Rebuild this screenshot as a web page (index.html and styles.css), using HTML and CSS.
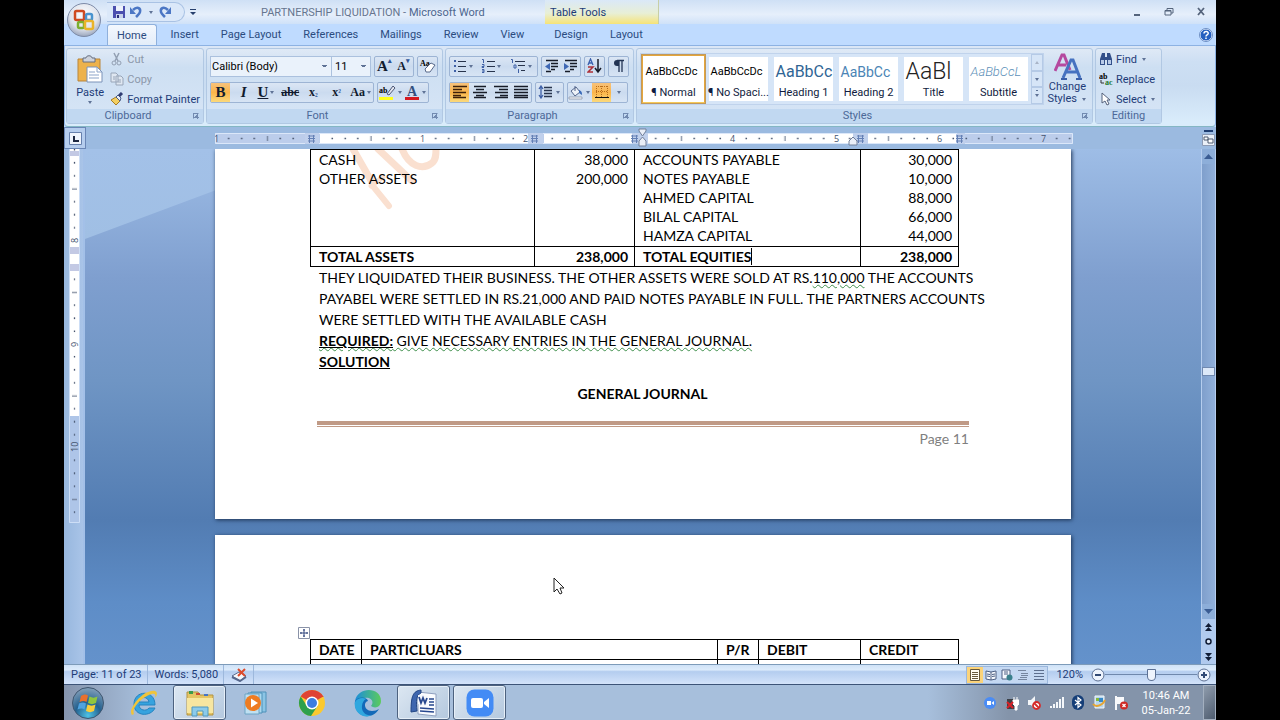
FILE: index.html
```html
<!DOCTYPE html>
<html lang="en">

<head>
	<meta charset="UTF-8" />
	<meta name="viewport" content="width=device-width, initial-scale=1.0" />
	<title>PARTNERSHIP LIQUIDATION - Microsoft Word</title>
	<link rel="stylesheet" href="styles.css">
</head>

<body>
	<div class="desktop">
		<button class="office" aria-label="Office Button">
			<svg width="36" height="36" viewBox="0 0 36 36">
				<defs>
					<radialGradient id="orb" cx="50%" cy="35%" r="65%">
						<stop offset="0" stop-color="#fff" />
						<stop offset=".65" stop-color="#dfe3ec" />
						<stop offset="1" stop-color="#9aa6bd" />
					</radialGradient>
				</defs>
				<circle cx="18" cy="18" r="16.5" fill="url(#orb)" stroke="#7d8ba8" />
				<g fill="none" stroke-width="2.500">
					<rect x="9" y="9" width="9" height="9" rx="1.500" stroke="#cf4a20" />
					<rect x="20" y="12" width="6" height="6" rx="1.500" stroke="#4a94cf" />
					<rect x="12" y="20" width="6" height="6" rx="1.500" stroke="#7cae2f" />
					<rect x="19" y="19" width="8" height="8" rx="1.500" stroke="#e9b42a" />
				</g>
			</svg>
		</button>

		<div class="titlebar">
			<div class="quick">
				<button aria-label="Save"><svg width="14" height="14" viewBox="0 0 14 14"><path d="M1 1h12v12H1z" fill="#4b4fae" /><path d="M4 1h7v5H4z" fill="#eef2fb" /><path d="M4 9h7v4H4z" fill="#c9d3ea" /><path d="M5 10h2v3H5z" fill="#2c2f78" /></svg></button>
				<button aria-label="Undo"><svg width="14" height="14" viewBox="0 0 14 14"><path d="M4 5c4-4 8-2 7 2-.4 2-2 3-4 5" fill="none" stroke="#4b76c4" stroke-width="2.500" /><path d="M1 2v7h6z" fill="#4b76c4" /></svg></button>
				<i class="arrow"></i>
				<button aria-label="Redo"><svg width="14" height="14" viewBox="0 0 14 14"><path d="M10 5c-4-4-8-2-7 2 .4 2 2 3 4 5" fill="none" stroke="#4b76c4" stroke-width="2.500" /><path d="M13 2v7H7z" fill="#4b76c4" /></svg></button>
			</div>
			<button class="custom" aria-label="Customize"><svg width="6" height="7"><path d="M0 0h6v1H0zM0 3h6L3 6z" fill="#27406e" /></svg></button>
			<div class="title">PARTNERSHIP LIQUIDATION - <span>Microsoft Word</span></div>
			<div class="context">Table Tools</div>
			<div class="winbtns">
				<button aria-label="Minimize"><svg width="10" height="10"><path d="M2 7h6v2H2z" fill="#55647c" /></svg></button>
				<button aria-label="Restore"><svg width="10" height="10"><path d="M3 3V1.500h6V6H7M1 3.500h6V8H1zM1 4h6" fill="none" stroke="#55647c" /></svg></button>
				<button aria-label="Close"><svg width="10" height="10"><path d="M2 1l6 7M8 1L2 8" stroke="#55647c" stroke-width="1.800" /></svg></button>
			</div>
		</div>

		<div class="tabs">
			<button class="active">Home</button>
			<button>Insert</button>
			<button>Page Layout</button>
			<button>References</button>
			<button>Mailings</button>
			<button>Review</button>
			<button>View</button>
			<div class="context-tabs">
				<button>Design</button>
				<button>Layout</button>
			</div>
			<button class="help" aria-label="Help"><svg width="14" height="14" viewBox="0 0 14 14"><circle cx="7" cy="7" r="6" fill="#2560c0" stroke="#e6f0ff" /><circle cx="7" cy="7" r="6.500" fill="none" stroke="#6d8fc4" /><path d="M5 5.500c0-3 4.500-2.600 4.200 0C9 7 7 6.800 7 8.500M7 9.500v1.500" fill="none" stroke="#fff" stroke-width="1.500" /></svg></button>
		</div>

		<div class="ribbon">
			<div class="group clipboard">
				<div class="body">
					<button class="paste">
						<svg width="26" height="28" viewBox="0 0 26 28"><path d="M1 4h22v22H1z" fill="#edb24c" stroke="#b9853a" /><path d="M6 3h3c0-3 6-3 6 0h3v4H6z" fill="#cdd2dc" stroke="#676f80" /><path d="M10 12h10l5 5v10H10z" fill="#fff" stroke="#7b92b8" /><path d="M20 12v5h5M12 17h6M12 20h10M12 23h10" fill="none" stroke="#8ba3c8" /></svg>
						<span>Paste</span>
						<i class="arrow"></i>
					</button>
					<div class="list">
						<button class="off"><svg width="14" height="14"><path d="M4 1l4 8M9 1L5 9" stroke="#929fb2" stroke-width="1.500" /><circle cx="4" cy="11" r="2" fill="none" stroke="#929fb2" /><circle cx="9" cy="11" r="2" fill="none" stroke="#929fb2" /></svg>Cut</button>
						<button class="off"><svg width="14" height="14"><path d="M1 1h5l2 2v7H1zM6 4h5l2 2v7H6z" fill="#dfe7f1" stroke="#98a5b8" /><path d="M8 8h3M8 10h3M3 5h2M3 7h2" stroke="#98a5b8" /></svg>Copy</button>
						<button><svg width="14" height="14"><path d="M1 8l5-3 4 4-4 4z" fill="#f3cf63" stroke="#a77d25" /><path d="M6 5l2-2 3 3-1 3z" fill="#e9edf5" stroke="#4a5e88" /><path d="M9 4l3-3" stroke="#303c72" stroke-width="3" /></svg>Format Painter</button>
					</div>
				</div>
				<div class="label">Clipboard<i class="launch"></i></div>
			</div>

			<div class="group font">
				<div class="body rows">
					<div class="row">
						<div class="combo">
							<select class="family" aria-label="Font"><option>Calibri (Body)</option><option>Cambria</option></select>
							<select class="size" aria-label="Font size"><option>11</option><option>12</option></select>
						</div>
						<div class="set">
							<button class="serif grow">A<sup>▴</sup></button>
							<button class="serif shrink">A<sup>▾</sup></button>
						</div>
						<div class="set"><button aria-label="Clear formatting"><svg width="18" height="16"><text x="1" y="8" class="tiny">Aa</text><path d="M6 11l6-6 4 2-5 7H7z" fill="#fff" stroke="#596a8b" /></svg></button></div>
					</div>
					<div class="row">
						<div class="set wide">
							<button class="serif on"><b>B</b></button>
							<button class="serif"><em>I</em></button>
							<button class="serif"><u>U</u><i class="arrow"></i></button>
							<button class="abc"><s>abc</s></button>
							<button class="abc">x<sub>₂</sub></button>
							<button class="abc">x<sub>²</sub></button>
							<button class="abc">Aa<i class="arrow"></i></button>
						</div>
						<div class="set">
							<button aria-label="Highlight"><svg width="18" height="17"><text x="1" y="9" class="tiny">ab</text><path d="M9 10l6-8 2 2-6 7z" fill="#e5e8f0" stroke="#4c5674" /><path d="M1 13h14v3H1z" fill="#ffff1c" /></svg><i class="arrow"></i></button>
							<button class="serif" aria-label="Font color"><svg width="16" height="17"><text x="3" y="12" class="big">A</text><path d="M1 13h14v3H1z" fill="#d51920" /></svg><i class="arrow"></i></button>
						</div>
					</div>
				</div>
				<div class="label">Font<i class="launch"></i></div>
			</div>

			<div class="group paragraph">
				<div class="body rows">
					<div class="row">
						<div class="set fill89">
							<button aria-label="Bullets"><svg width="14" height="14"><path d="M5 2.500h8M5 7.500h8M5 12.500h8" stroke="#28344c" /><path d="M1 1h2v2H1zM1 6h2v2H1zM1 11h2v2H1z" fill="#3f60a6" /></svg><i class="arrow"></i></button>
							<button aria-label="Numbering"><svg width="14" height="14"><path d="M6 2.500h8M6 7.500h8M6 12.500h8" stroke="#28344c" /><path d="M1 .500h1.500V4M1 5.500h2v2H1v1h2M1 10.500h2v3H1M1 12h2" fill="none" stroke="#3f60a6" /></svg><i class="arrow"></i></button>
							<button aria-label="Multilevel list"><svg width="16" height="14"><path d="M5 2.500h10M8 6.500h7M11 11.500h4" stroke="#28344c" /><path d="M1 .500h1.500V4M4 6h2v3H4zM8.500 10v4" fill="none" stroke="#3f60a6" /></svg><i class="arrow"></i></button>
						</div>
						<div class="set">
							<button aria-label="Decrease indent"><svg width="14" height="14"><path d="M1 1.500h12M6 4.500h7M6 7.500h7M6 10.500h4M1 12.500h5" stroke="#171c28" stroke-width="1.500" /><path d="M5 4v7L0 7.500z" fill="#3f68b5" /></svg></button>
							<button aria-label="Increase indent"><svg width="14" height="14"><path d="M1 1.500h12M6 4.500h7M6 7.500h7M6 10.500h4M1 12.500h5" stroke="#171c28" stroke-width="1.500" /><path d="M0 4v7l5-3.500z" fill="#3f68b5" /></svg></button>
						</div>
						<div class="set"><button aria-label="Sort"><svg width="15" height="16"><path d="M1 7l2.500-6L6 7M2 5h3" fill="none" stroke="#3b61ae" stroke-width="1.300" /><path d="M1 9h5l-5 5h5" fill="none" stroke="#ad3038" stroke-width="1.500" /><path d="M11 1v12M8 10l3 4 3-4" fill="none" stroke="#171c28" stroke-width="1.500" /></svg></button></div>
						<div class="set"><button aria-label="Show marks"><svg width="12" height="14"><path d="M6 1H4a3 3 0 000 6h2z" fill="#223454" /><path d="M4 1.500h7M6 1v12M9 1v12" stroke="#223454" stroke-width="1.300" /></svg></button></div>
					</div>
					<div class="row">
						<div class="set fill83">
							<button class="on" aria-label="Align left"><svg width="14" height="14"><path d="M0 1.500h14M0 4.500h9M0 7.500h13M0 10.500h8M0 12.500h13" stroke="#3d210b" stroke-width="1.500" /></svg></button>
							<button aria-label="Center"><svg width="14" height="14"><path d="M1 1.500h12M3 4.500h8M0 7.500h14M3 10.500h8M1 12.500h12" stroke="#171c28" stroke-width="1.500" /></svg></button>
							<button aria-label="Align right"><svg width="14" height="14"><path d="M0 1.500h14M5 4.500h9M1 7.500h13M6 10.500h8M1 12.500h13" stroke="#171c28" stroke-width="1.500" /></svg></button>
							<button aria-label="Justify"><svg width="14" height="14"><path d="M0 1.500h14M0 4.500h14M0 7.500h14M0 10.500h14M0 12.500h14" stroke="#171c28" stroke-width="1.500" /></svg></button>
						</div>
						<div class="set"><button class="spacing" aria-label="Line spacing"><svg width="16" height="14"><path d="M6 2.500h8M6 5.500h8M6 8.500h8M6 11.500h8" stroke="#28344c" stroke-width="1.300" /><path d="M3 2v10M1 4l2-3 2 3M1 10l2 3 2-3" fill="none" stroke="#3f60a6" stroke-width="1.300" /></svg><i class="arrow"></i></button></div>
						<div class="set">
							<button aria-label="Shading"><svg width="16" height="15"><path d="M3 6l5-4 4 5-5 4z" fill="#eef2f8" stroke="#53658a" /><path d="M11 5c3 1 3 3 3 5l-3-2z" fill="#3a6ab8" /><path d="M7 1v5" stroke="#53658a" /><path d="M1 12h13v2H1z" fill="#fff" stroke="#9aa4b6" /></svg><i class="arrow"></i></button>
							<button class="on" aria-label="Borders"><svg width="14" height="14"><path d="M1.500 1v11M6.500 1v11M12.500 1v11M1 1.500h12M1 6.500h12" stroke="#b86d1b" stroke-dasharray="1 1" /><path d="M0 12h14v1H0z" fill="#111" /></svg></button>
							<button class="thin" aria-label="Border options"><i class="arrow"></i></button>
						</div>
					</div>
				</div>
				<div class="label">Paragraph<i class="launch"></i></div>
			</div>

			<div class="group styles">
				<div class="body">
					<div class="gallery">
						<button class="chosen"><span class="sample">AaBbCcDc</span><span>¶ Normal</span></button>
						<button><span class="sample">AaBbCcDc</span><span>¶ No Spaci...</span></button>
						<button><span class="sample h1">AaBbCc</span><span>Heading 1</span></button>
						<button><span class="sample h2">AaBbCc</span><span>Heading 2</span></button>
						<button><span class="sample ttl">AaBl</span><span>Title</span></button>
						<button><span class="sample sub">AaBbCcL</span><span>Subtitle</span></button>
						<div class="pager">
							<button aria-label="Up"><i class="arrow up"></i></button>
							<button aria-label="Down"><i class="arrow"></i></button>
							<button aria-label="More"><i class="arrow more"></i></button>
						</div>
					</div>
					<button class="change">
						<svg width="28" height="28"><path d="M1 18L8 2h2l6 15M4 12h8" fill="none" stroke="#b5499f" stroke-width="3" /><path d="M9 25l8-18h2l7 18M12 19h11" fill="none" stroke="#4672c0" stroke-width="3" /><path d="M7 26h6M22 26h6" stroke="#3a5fa8" stroke-width="2" /></svg>
						<span>Change</span>
						<span>Styles <i class="arrow"></i></span>
					</button>
				</div>
				<div class="label">Styles<i class="launch"></i></div>
			</div>

			<div class="group editing">
				<div class="body">
					<div class="list">
						<button><svg width="14" height="14"><path d="M3 1h3v4h2V1h3l2 6v6H8V8H6v5H1V7z" fill="#33508a" /><path d="M2 8h3v4H2zM9 8h3v4H9z" fill="#b9cbe9" /></svg>Find <i class="arrow"></i></button>
						<button><svg width="14" height="14"><text x="0" y="7" class="tiny">ab</text><path d="M2 8v3h3" fill="none" stroke="#333" /><text x="6" y="13" class="tiny green">ac</text></svg>Replace</button>
						<button><svg width="14" height="14"><path d="M3 1v10l3-2 2 4 2-1-2-4h3z" fill="#fff" stroke="#55627c" /></svg>Select <i class="arrow"></i></button>
					</div>
				</div>
				<div class="label">Editing</div>
			</div>
		</div>

		<div class="rulerbar">
			<button class="tabstop" aria-label="Left tab"><svg width="13" height="13"><path d="M.500.500h12v12H.500z" fill="#eef4fd" stroke="#6680ad" /><path d="M5 4v5h5" fill="none" stroke="#1c2742" stroke-width="2" /></svg></button>
			<svg class="hruler" width="858" height="21" viewBox="0 0 858 21">
				<defs>
					<pattern id="ticks" x="104" y="0" width="103.500" height="12" patternUnits="userSpaceOnUse">
						<path d="M12.500 5.500h1.500M25.500 5.500h1.500M38 5.500h1.500M64 5.500h1.500M77 5.500h1.500M90 5.500h1.500" stroke="#3f4d66" stroke-width="1.300" />
						<path d="M52 3v5" stroke="#5a6880" />
					</pattern>
				</defs>
				<path d="M0 5h858v11H0z" fill="#bccdeb" />
				<path d="M105 5h211v11H105zM329 5h88v11H329zM433 5h205v11H433zM653 5h88v11H653z" fill="#fff" />
				<g transform="translate(0 5)"><path d="M4 0h854v12H4z" fill="url(#ticks)" /></g>
				<path d="M.500 5.500h857v10H.500z" fill="none" stroke="#dbe7f9" />
				<g fill="#c0d0ec"><path d="M313 5h15v11h-15zM417 5h16v11h-16zM638 5h15v11h-15zM90 5h14v11H90zM742 5h8v11h-8z" /></g>
				<g stroke="#6480b5">
					<path d="M93 8h7M93 10.500h7M93 13h7M94.500 7v8M98.500 7v8M316 8h7M316 10.500h7M316 13h7M317.500 7v8M321.500 7v8M416 8h7M416 10.500h7M416 13h7M417.500 7v8M421.500 7v8M642 8h7M642 10.500h7M642 13h7M643.500 7v8M647.500 7v8M741 8h7M741 10.500h7M741 13h7M742.500 7v8M746.500 7v8" />
				</g>
				<path d="M424 1h7v2l-3.500 5L424 3zM424 18v-5l3.500-4 3.500 4v5zM634 17v-4l4-4 4 4v4z" fill="#e9eef7" stroke="#72809b" />
				<g class="nums"><text x="-1" y="14">1</text><text x="205" y="14">1</text><text x="308" y="14">2</text><text x="515" y="14">4</text><text x="619" y="14">5</text><text x="722" y="14">6</text><text x="826" y="14">7</text></g>
			</svg>
			<button class="viewruler" aria-label="View ruler"><svg width="13" height="17"><path d="M2 0h9v2H2z" fill="#1d3c70" /><path d="M.500 4.500h12v11H.500z" fill="#eaf0f8" stroke="#8c9bb5" /><path d="M2 7h4v3H2zM6 9h5v4H6z" fill="#fff" stroke="#4d5a70" /></svg></button>
		</div>

		<div class="workspace">
			<div class="vruler">
				<svg width="11" height="374" viewBox="0 0 11 374">
					<defs>
						<pattern id="vticks" x="0" y="-12" width="11" height="103.500" patternUnits="userSpaceOnUse">
							<path d="M5.500 12v1.500M5.500 25v1.500M5.500 38v1.500M5.500 64v1.500M5.500 77v1.500M5.500 90v1.500" stroke="#3f4d66" stroke-width="1.300" />
							<path d="M3 52h5" stroke="#5a6880" />
						</pattern>
					</defs>
					<path d="M0 0h11v267H0z" fill="#fff" />
					<path d="M0 267h11v107H0z" fill="#aec5e8" />
					<path d="M0 2h11v5H0z" fill="#c3c9e4" />
					<path d="M0 0h11v374H0z" fill="url(#vticks)" />
					<path d="M0 86h11v34H0z" fill="#fff" />
					<path d="M0 98h11v7H0zM0 115h11v7H0z" fill="#c3c9e4" />
					<path d="M.500 0v373.500h10V0" fill="none" stroke="#cddef6" />
					<g class="nums"><text transform="translate(9 94) rotate(-90)">8</text><text transform="translate(9 198) rotate(-90)">9</text><text transform="translate(9 303) rotate(-90)">10</text></g>
				</svg>
			</div>

			<div class="canvas">
				<div class="page first">
					<svg class="watermark" width="110" height="70" viewBox="0 0 110 70"><g fill="none" stroke="#fae0d0" stroke-width="7" stroke-linecap="round"><path d="M13 0l20 35M38 0l34 32" /><path d="M32 36l17 21" stroke-width="6" /><path d="M31 37l12-9" stroke-width="5" /><path d="M62 0c7 17 20 22 30 14 4-3 4-8 4-14" /></g></svg>
					<table class="sheet balance">
						<tr class="lines">
							<td>CASH<br>OTHER ASSETS</td>
							<td class="num">38,000<br>200,000</td>
							<td>ACCOUNTS PAYABLE<br>NOTES PAYABLE<br>AHMED CAPITAL<br>BILAL CAPITAL<br>HAMZA CAPITAL</td>
							<td class="num">30,000<br>10,000<br>88,000<br>66,000<br>44,000</td>
						</tr>
						<tr class="total">
							<td>TOTAL ASSETS</td>
							<td class="num">238,000</td>
							<td><span class="caret">TOTAL EQUITIES</span></td>
							<td class="num">238,000</td>
						</tr>
					</table>
					<div class="text">
						<p>THEY LIQUIDATED THEIR BUSINESS. THE OTHER ASSETS WERE SOLD AT RS.<span class="wavy">110,000</span> THE ACCOUNTS<br>PAYABEL WERE SETTLED IN RS.21,000 AND PAID NOTES PAYABLE IN FULL. THE PARTNERS ACCOUNTS<br>WERE SETTLED WITH THE AVAILABLE CASH</p>
						<p class="wavy"><b><u>REQUIRED:</u></b> GIVE NECESSARY ENTRIES IN THE GENERAL JOURNAL.</p>
						<p><b><u>SOLUTION</u></b></p>
						<h1>GENERAL JOURNAL</h1>
					</div>
					<div class="footer">Page 11</div>
				</div>
				<div class="page second">
					<svg class="handle" width="12" height="12"><path d="M.500.500h11v11H.500z" fill="#fff" stroke="#8a93a8" /><path d="M6 2v8M2 6h8M5 3h2M5 9h2M3 5v2M9 5v2" stroke="#34487e" /></svg>
					<table class="sheet journal">
						<tr>
							<th>DATE</th>
							<th>PARTICLUARS</th>
							<th>P/R</th>
							<th>DEBIT</th>
							<th>CREDIT</th>
						</tr>
						<tr>
							<td></td>
							<td></td>
							<td></td>
							<td></td>
							<td></td>
						</tr>
					</table>
				</div>
				<svg class="cursor" width="12" height="18"><path d="M1 1v14l3-3 3 5 2-1-2-5h4z" fill="#fff" stroke="#222" /></svg>
			</div>

			<div class="scroll">
				<button aria-label="Scroll up"><svg width="9" height="5"><path d="M0 5h9L4.500 0z" fill="#3a5c93" /></svg></button>
				<div class="track"><div class="thumb"></div></div>
				<button aria-label="Scroll down"><svg width="9" height="5"><path d="M0 0h9L4.500 5z" fill="#3a5c93" /></svg></button>
				<button class="nav" aria-label="Previous page"><svg width="7" height="8"><path d="M0 4h7L3.500 0zM0 8h7L3.500 4z" fill="#111d35" /></svg></button>
				<button class="nav" aria-label="Browse object"><svg width="7" height="7"><circle cx="3.500" cy="3.500" r="2.500" fill="#dde8f8" stroke="#111d35" stroke-width="1.500" /></svg></button>
				<button class="nav" aria-label="Next page"><svg width="7" height="8"><path d="M0 0h7L3.500 4zM0 4h7L3.500 8z" fill="#111d35" /></svg></button>
			</div>
		</div>

		<div class="status">
			<span>Page: 11 of 23</span>
			<span>Words: 5,080</span>
			<span><svg width="17" height="14"><path d="M1 8l7-4 7 4-6 5z" fill="#f4f7fb" stroke="#56688d" /><path d="M1 9l8 4 6-4" fill="none" stroke="#56688d" stroke-width="2" /><path d="M7 1l7 7M14 1L7 8" stroke="#dc4a2c" stroke-width="2" /></svg></span>
			<div class="views">
				<button class="on" aria-label="Print layout"><svg width="12" height="12"><path d="M1.500.500h9v11h-9z" fill="#fffdf2" stroke="#66593c" /><path d="M3 3.500h6M3 5.500h6M3 7.500h6M3 9.500h6" stroke="#66593c" /></svg></button>
				<button aria-label="Full screen reading"><svg width="12" height="12"><path d="M1 2l5 1 5-1v8l-5 1-5-1zM6 3v8M2 5l3 .500M2 7l3 .500M7 5.500L10 5M7 7.500L10 7" fill="#f6f9fe" stroke="#4c5f82" /></svg></button>
				<button aria-label="Web layout"><svg width="12" height="12"><path d="M1 1h8v9H1zM3 3h4M3 5h4" fill="#f6f9fe" stroke="#4c5f82" /><circle cx="8.500" cy="8.500" r="3" fill="#39808c" /></svg></button>
				<button aria-label="Outline"><svg width="12" height="12"><path d="M1 1.500h8M4 4.500h7M4 6.500h7M3 8.500h7M1 10.500h9" stroke="#75869f" /></svg></button>
				<button aria-label="Draft"><svg width="12" height="12"><path d="M1 1.500h10M1 4.500h10M1 7.500h10M1 10.500h10" stroke="#5d6f8d" /></svg></button>
			</div>
			<label for="zoomer">120%</label>
			<button class="round" aria-label="Zoom out"><svg width="14" height="14"><circle cx="7" cy="7" r="6" fill="#eef4fd" stroke="#5d7194" /><path d="M4 7h6" stroke="#324a75" stroke-width="2" /></svg></button>
			<input type="range" id="zoomer" min="0" max="100" value="50">
			<button class="round" aria-label="Zoom in"><svg width="14" height="14"><circle cx="7" cy="7" r="6" fill="#eef4fd" stroke="#5d7194" /><path d="M4 7h6M7 4v6" stroke="#324a75" stroke-width="2" /></svg></button>
		</div>

		<div class="taskbar">
			<button class="start" aria-label="Start">
				<svg width="34" height="34" viewBox="0 0 34 34">
					<defs>
						<radialGradient id="startorb" cx="50%" cy="90%" r="85%">
							<stop offset="0" stop-color="#4ec3e6" />
							<stop offset=".5" stop-color="#24618f" />
							<stop offset="1" stop-color="#7d9bb6" />
						</radialGradient>
					</defs>
					<circle cx="17" cy="17" r="15.500" fill="url(#startorb)" stroke="#40566f" />
					<path d="M10 10c3-2 5-2 7-.500L15.500 16c-2-1.500-4-1.500-7 0z" fill="#e9702d" />
					<path d="M18.500 10.500c3 1.500 5 1.500 8 0L25 17c-3 1.500-5 1.500-8 0z" fill="#91c63e" />
					<path d="M8 17.500c3-1.500 5-1.500 7 0L13.500 23.500c-2-1.500-4-1.500-7 0z" fill="#4fa3e0" />
					<path d="M16.500 18.500c3 1.500 5 1.500 8 0L23 25c-3 1.500-5 1.500-8 0z" fill="#f8cd3c" />
				</svg>
			</button>
			<button class="task" aria-label="Internet Explorer">
				<svg width="30" height="30"><path d="M10 17h16c0-16-21-15-21-1 0 13 17 13 21 4h-6c-3 4-10 2-10-3zm0-3c1-6 9-6 10 0z" fill="#36a3df" fill-rule="evenodd" stroke="#2583c0" /><path d="M3 27C-2 22 14 1 26 3c3 1 2 5 0 7 1-3 0-5-3-4C14 8 2 20 5 26z" fill="#f0c43a" /></svg>
			</button>
			<button class="task open" aria-label="Explorer">
				<svg width="32" height="30"><path d="M3 4h11l2 3h13v20H3z" fill="#e5c564" stroke="#b29343" /><path d="M5 3h4v3H5z" fill="#3b9a4c" /><path d="M12 5h4v2h-4z" fill="#d14b33" /><path d="M20 6h4v2h-4z" fill="#4574c4" /><path d="M3 10h26v15H3z" fill="#f7e6a0" /><path d="M8 28v-9h16v9h-5v-5h-6v5z" fill="#8ccbea" stroke="#4e98bf" /></svg>
			</button>
			<button class="task" aria-label="Media Player">
				<svg width="26" height="26"><path d="M8 2h15v20H8z" fill="#8cc5e5" stroke="#4e91b9" /><path d="M5 3h14v20H5z" fill="#acd9ef" stroke="#4e91b9" /><path d="M2 4h14v20H2z" fill="#bfe0f2" stroke="#6da4c4" /><circle cx="10" cy="13" r="8" fill="#ee7c22" /><path d="M8 8.500v9l7-4.500z" fill="#fff" /></svg>
			</button>
			<button class="task" aria-label="Chrome">
				<svg width="28" height="28" viewBox="0 0 28 28"><circle cx="14" cy="14" r="13" fill="#fbc92f" /><path d="M14 14L2.700 7.500A13 13 0 0125.300 7.500z" fill="#df4334" /><path d="M2.700 7.500A13 13 0 0013 27l6.500-10H9z" fill="#2da04c" /><path d="M14 7.500h11.300" stroke="#df4334" /><circle cx="14" cy="14" r="6.500" fill="#fff" /><circle cx="14" cy="14" r="5" fill="#3c7de0" /></svg>
			</button>
			<button class="task" aria-label="Edge">
				<svg width="28" height="28" viewBox="0 0 28 28"><defs><linearGradient id="edge" x1="0" x2="1"><stop offset="0" stop-color="#1c8edb" /><stop offset="1" stop-color="#5ccb5c" /></linearGradient></defs><path d="M1 12C4-3 27-2 27 12c0 6-6 8-10 5 4-5-1-9-6-8-5 0-9 3-10 3z" fill="url(#edge)" /><path d="M1 12c4-5 12-4 13 0-5 1-4 10 4 10 3 0 5-1 7-2-8 13-26 7-24-8z" fill="#1269b8" /><path d="M8 17c-1 7 6 11 11 9C8 31-1 22 1 13c2-4 8-5 11-3-2 1-4 4-4 7z" fill="#2fa7df" /></svg>
			</button>
			<button class="task open" aria-label="Word">
				<svg width="30" height="30"><path d="M9 4l18 2v22L9 26z" fill="#fafcff" stroke="#8fa0bf" /><path d="M20 11h5M20 14h5M20 17h5M11 20l14 1M11 23l14 1" stroke="#28488f" stroke-width="1.500" /><path d="M2 24C2 8 4 3 12 2v3c-5 2-5 8-4 18z" fill="#3e66ae" stroke="#234684" /><path d="M9 7l10 1v9L9 16z" fill="#f4f7fc" /><path d="M10 9l2 6 2-5 2 5 2-5" fill="none" stroke="#28488f" stroke-width="1.800" /></svg>
			</button>
			<button class="task open" aria-label="Zoom">
				<svg width="28" height="28"><rect x=".500" y=".500" width="27" height="27" rx="8" fill="#438bf5" /><rect x="5" y="9" width="12" height="10" rx="2" fill="#fff" /><path d="M18 13l5-4v10l-5-4z" fill="#fff" /></svg>
			</button>
			<div class="tray">
				<svg width="14" height="14"><circle cx="7" cy="7" r="6" fill="#4a8cf5" /><path d="M4 5h4v4H4zM8.500 7L11 5v4z" fill="#fff" /></svg>
				<svg width="14" height="16"><path d="M2 4h8v10H2z" fill="#3d4148" /><path d="M9 2v3M12 2v3M8 5h6v4l-2 2v4h-2v-4L8 9z" fill="#fff" stroke="#fff" /><path d="M2 7l6 6M8 7l-6 6" stroke="#d82027" stroke-width="2" /></svg>
				<svg width="14" height="14"><path d="M1 4h3l4-4v13L4 9H1z" fill="#f3f5f8" /><circle cx="9.500" cy="9.500" r="3.500" fill="#fff" stroke="#d52b2b" stroke-width="1.800" /><path d="M7 7l5 5" stroke="#d52b2b" stroke-width="1.800" /></svg>
				<svg width="15" height="13"><path d="M1 10h2v2H1zM4 8h2v4H4zM7 6h2v6H7zM10 3h2v9h-2zM13 1h2v11h-2z" fill="#f4f7fa" /></svg>
				<svg width="12" height="15"><rect width="12" height="15" rx="6" fill="#153e78" /><path d="M3 5l6 5-3 2.500v-10L9 5l-6 5" fill="none" stroke="#fff" stroke-width="1.200" /></svg>
				<svg width="14" height="15"><path d="M3 1h9v12H3z" fill="#b7d6ec" stroke="#f4f8fb" /><path d="M4 3h3v3H4z" fill="#87b839" /><path d="M7 3h4v4H7z" fill="#3689c9" /><path d="M1 9c3 4 10 1 12-4" fill="none" stroke="#e6a533" stroke-width="2" /></svg>
				<svg width="15" height="15"><path d="M1 1v14h2V9h7V2H3V1z" fill="#f8f9fb" /><circle cx="10" cy="10.500" r="4" fill="#cf2a25" /><path d="M8.500 9l3 3M11.500 9l-3 3" stroke="#fff" stroke-width="1.300" /></svg>
			</div>
			<div class="clock">10:46 AM<br>05-Jan-22</div>
			<button class="show" aria-label="Show desktop"></button>
		</div>
	</div>
</body>

</html>
```
FILE: styles.css
```css
*,
*::before {
	box-sizing: border-box;
}

html,
body {
	height: 100%;
	margin: 0;
}

body {
	background: #000;
	padding: 0 5%;
	overflow: hidden;
	font: 11px Roboto, "Open Sans", sans-serif;
	color: #1e3c78;
}

button {
	font: inherit;
	color: inherit;
	background: none;
	border: 0;
	padding: 0;
	margin: 0;
	display: flex;
	align-items: center;
	justify-content: center;
	white-space: nowrap;
}

svg {
	display: block;
	flex: none;
}

.desktop {
	position: relative;
	height: 100%;
	display: flex;
	flex-direction: column;
	background: #bfdbff;
}

.arrow {
	display: inline-block;
	flex: none;
	border: 2px solid transparent;
	border-top: 3px solid #5f7396;
	border-bottom: 0;
	margin: 0 2px;
	vertical-align: middle;
}

.arrow.up {
	border-top: 0;
	border-bottom: 3px solid #a9b4c6;
}

.arrow.more {
	box-shadow: 0 -5px 0 -1px #5f7396;
}

/* title bar */

.office {
	position: absolute;
	left: 2px;
	top: 2px;
	z-index: 2;
}

.titlebar {
	height: 24px;
	flex: none;
	display: flex;
	align-items: center;
	padding-left: 43px;
	background: linear-gradient(#cfe0f5, #e6effb 60%, #cfe1f8);
}

.quick {
	height: 20px;
	width: 78px;
	display: flex;
	align-items: center;
	justify-content: space-around;
	padding: 0 10px 0 3px;
	border: 1px solid #a9c2e4;
	border-left: 0;
	border-radius: 0 10px 10px 0;
	background: #dbe8f9;
}

.custom {
	width: 15px;
}

.title {
	width: 345px;
	padding-left: 61px;
	color: #66758f;
	white-space: nowrap;
}

.title span {
	color: #4d668f;
}

.context {
	width: 114px;
	height: 24px;
	line-height: 25px;
	padding-left: 5px;
	background: linear-gradient(#dae8f8, #e8efd6 55%, #f6e377);
	border-right: 1px solid #c7cfa6;
}

.winbtns {
	margin-left: auto;
	display: flex;
	gap: 22px;
	padding-right: 10px;
}

.tabs {
	height: 21px;
	flex: none;
	display: flex;
	padding-left: 43px;
	background: #bfdbff;
	color: #2b4b80;
}

.tabs button {
	padding: 0 11px;
}

.tabs .active {
	padding: 0 9px;
	border: 1px solid #8fb0dc;
	border-bottom: 0;
	border-radius: 3px 3px 0 0;
	background: linear-gradient(#f4f8fe, #e3edf9);
	margin-right: 3px;
}

.context-tabs {
	display: flex;
	margin-left: 8px;
}

.tabs .help {
	margin-left: auto;
	padding: 0 3px;
}

/* ribbon */

.ribbon {
	height: 82px;
	flex: none;
	display: flex;
	gap: 2px;
	padding: 2px 1px;
	border: 1px solid #8db2e3;
	border-bottom-color: #84b7c4;
	border-radius: 0 0 4px 4px;
	background: linear-gradient(#dbe7f6, #cddff3 20%, #c9dcf1 50%, #d9ecfb 95%);
}

.group {
	display: flex;
	flex: none;
	flex-direction: column;
	border: 1px solid #b1c8e3;
	border-radius: 3px;
	background: linear-gradient(#dfe9f6, #cddff2 25%, #d7e5f6);
}

.group .body {
	flex: 1;
	min-height: 0;
	display: flex;
	padding: 0 3px;
}

.group .label {
	position: relative;
	height: 14px;
	flex: none;
	line-height: 14px;
	text-align: center;
	padding-right: 14px;
	color: #4c6898;
	background: #c1d8f1;
}

.group.editing .label {
	padding: 0;
}

.launch {
	position: absolute;
	right: 4px;
	top: 4px;
	width: 6px;
	height: 6px;
	border: 1px solid #728ab0;
	border-right-color: transparent;
	border-bottom-color: transparent;
	background: linear-gradient(135deg, transparent 45%, #728ab0 46%);
}

.clipboard {
	width: 138px;
}

.font {
	width: 237px;
}

.paragraph {
	width: 189px;
}

.styles {
	width: 457px;
}

.editing {
	width: 67px;
}

.group .paste,
.group .change {
	flex-direction: column;
	line-height: 12px;
}

.paste {
	width: 42px;
}

.paste span {
	padding: 4px 0 2px;
}

.list {
	display: flex;
	flex-direction: column;
	align-items: flex-start;
}

.list button {
	height: 20px;
	gap: 3px;
}

.list .off {
	color: #8c98aa;
}

.group .rows {
	flex-direction: column;
	justify-content: center;
	gap: 5px;
}

.row {
	display: flex;
	gap: 3px;
}

.set {
	display: flex;
	height: 21px;
	border: 1px solid #9db4d4;
	border-radius: 2px;
	background: linear-gradient(#dbe6f4, #cbdbef 50%, #d7e4f4);
}

.set button {
	min-width: 19px;
	color: #111b2e;
}

.set .on {
	background: linear-gradient(#f7c27c, #fbb54a 50%, #fbd97b);
}

.set .thin {
	min-width: 16px;
}

.set .spacing {
	min-width: 27px;
}

.wide {
	width: 164px;
	justify-content: space-between;
}

.fill89 {
	width: 89px;
	justify-content: space-around;
}

.fill83 {
	width: 83px;
	justify-content: space-between;
}

.serif {
	font: bold 15px "Liberation Serif", serif;
}

.set .shrink {
	font-size: 12px;
}

.serif sup {
	font-size: 7px;
	align-self: flex-start;
	color: #2f5597;
}

.abc {
	font: bold 12px "Liberation Serif", serif;
}

.set .abc sub {
	font-size: 9px;
	color: #2f5597;
}

.tiny {
	font: bold 8px "Liberation Serif", serif;
}

.green {
	fill: #1d7a2b;
}

.big {
	font: bold 14px "Liberation Serif", serif;
	fill: #34507f;
}

.combo {
	display: flex;
	width: 161px;
}

.combo select {
	appearance: none;
	height: 21px;
	border: 1px solid #abc1de;
	border-radius: 0;
	padding: 0 1px;
	font: inherit;
	color: #000;
	background: linear-gradient(#5f7396, #5f7396) right 5px top 9px / 3px 1px no-repeat, linear-gradient(#5f7396, #5f7396) right 4px top 8px / 5px 1px no-repeat, #eaf2fb;
}

.combo .family {
	width: 122px;
}

.combo .size {
	width: 39px;
	border-left: 0;
	padding-left: 3px;
}

.styles .body {
	padding: 4px 1px 4px 3px;
}

.gallery {
	width: 404px;
	flex: none;
	display: flex;
	background: #d6e5f7;
	border: 1px solid #c0d3ec;
}

.gallery > button {
	width: 65px;
	flex: none;
	flex-direction: column;
	border: 3px solid #d6e5f7;
	background: #fff;
	color: #111c40;
	line-height: 14px;
}

.gallery > .chosen {
	border: 2px solid #e5a63c;
	border-bottom-color: #f6c957;
	outline: 1px solid #c2995a;
	outline-offset: -1px;
}

.sample {
	width: 56px;
	height: 28px;
	line-height: 28px;
	text-align: left;
	color: #000;
}

.sample.h1 {
	font-size: 16px;
	color: #2f6595;
}

.sample.h2 {
	font-size: 14px;
	color: #4a84b5;
}

.sample.ttl {
	font-size: 23px;
	font-weight: 300;
	color: #222;
}

.sample.sub {
	font-size: 13px;
	font-style: italic;
	font-weight: 300;
	color: #5d8fb8;
}

.pager {
	flex: 1;
	display: flex;
	flex-direction: column;
}

.pager button {
	flex: 1;
	border: 1px solid #b5cae6;
}

.change {
	flex: 1;
}

/* rulers */

.rulerbar {
	height: 22px;
	flex: none;
	display: flex;
	justify-content: space-between;
	align-items: center;
	background: #9bbae0;
}

.tabstop {
	width: 22px;
	height: 22px;
	border: 1px solid #6a86b6;
	background: #b5cdee;
}

.viewruler {
	width: 15px;
}

.nums {
	font: 9px "Open Sans", sans-serif;
	fill: #44546f;
}

.workspace {
	flex: 1;
	min-height: 0;
	display: flex;
}

.vruler {
	width: 21px;
	flex: none;
	padding-left: 5px;
	background: linear-gradient(90deg, #97b7de, #a9c4e8);
	border-right: 2px solid #a3c0e8;
}

.canvas {
	position: relative;
	flex: 1;
	overflow: hidden;
	background: linear-gradient(#9ebde6, #7f9fcf 25%, #6f95c4 45%, #527cb2 72%, #5e8dc7 88%, #6492cb);
}

.canvas::before {
	content: "";
	position: absolute;
	inset: 0 0 auto;
	height: 90px;
	background: linear-gradient(#a3c1e8, #a0bfe4);
	clip-path: polygon(0 0, 20% 0, 12% 40px, 0 100%);
}

.page {
	position: relative;
	width: 856px;
	margin: 0 auto 16px;
	padding-left: 95px;
	background: #fff;
	box-shadow: 1px 1px 4px #1b3152;
	color: #000;
	font: 14px Lato, "Open Sans", sans-serif;
}

.first {
	height: 370px;
}

.second {
	height: 300px;
	padding-top: 104px;
}

.watermark {
	position: absolute;
	left: 125px;
	top: 0;
}

.sheet {
	position: relative;
	width: 649px;
	table-layout: fixed;
	border-collapse: collapse;
	line-height: 19px;
}

.sheet td,
.sheet th {
	border: 1px solid #000;
	padding: 0 6px 0 8px;
	text-align: left;
	vertical-align: top;
}

.sheet .lines td {
	padding-bottom: 1px;
}

.sheet .num {
	text-align: right;
}

.total {
	font-weight: bold;
}

.balance td:nth-child(1) {
	width: 224px;
}

.balance td:nth-child(2) {
	width: 100px;
}

.balance td:nth-child(3) {
	width: 226px;
}

.caret {
	border-right: 1px solid #000;
}

.text {
	padding-left: 9px;
	line-height: 21px;
	white-space: nowrap;
}

.text p {
	margin: 0;
}

.wavy {
	text-decoration: underline wavy #3f8f4c 1px;
	width: fit-content;
}

.text h1 {
	font-size: 14px;
	line-height: 21px;
	text-align: center;
	margin: 11px 103px 17px 0;
	padding-right: 2px;
}

.footer {
	width: 652px;
	margin-left: 7px;
	line-height: 24px;
	text-align: right;
	color: #7f7f7f;
}

.footer::before {
	content: "";
	display: block;
	height: 6px;
	border-top: 4px solid #c09a86;
	border-bottom: 1px solid #c09a86;
}

.handle {
	position: absolute;
	left: 83px;
	top: 92px;
}

.journal th:nth-child(1) {
	width: 51px;
}

.journal th:nth-child(2) {
	width: 356px;
}

.journal th:nth-child(3) {
	width: 41px;
}

.journal th:nth-child(4) {
	width: 102px;
}

.journal td {
	height: 20px;
}

.cursor {
	position: absolute;
	left: 468px;
	top: 428px;
}

.scroll {
	width: 15px;
	flex: none;
	display: flex;
	flex-direction: column;
	background: #8daed9;
	border: 1px solid #b5cdee;
	border-width: 0 1px;
}

.scroll button {
	height: 15px;
	flex: none;
}

.scroll .nav {
	background: #b0caee;
}

.track {
	flex: 1;
	padding-top: 203px;
	background: linear-gradient(90deg, #7f9fcc, #91b0da);
}

.thumb {
	height: 9px;
	border: 1px solid #7089b0;
	background: #dce8f8;
}

/* status bar */

.status {
	height: 21px;
	flex: none;
	display: flex;
	align-items: center;
	background: linear-gradient(#cfe2f7, #dcebfb 25%, #b4cdef 35%, #d3e3fa);
	border-top: 1px solid #7d9bb9;
	border-bottom: 1px solid #3d5478;
}

.status > span {
	height: 19px;
	line-height: 18px;
	display: flex;
	align-items: center;
	padding: 0 5px 0 7px;
	border-right: 1px solid #9db8dc;
}

.views {
	margin-left: auto;
	display: flex;
	border: 1px solid #9bb7dc;
	background: #c4d8f2;
}

.views button {
	width: 16px;
	height: 16px;
}

.views .on {
	background: #fbd37a;
}

.status label {
	padding: 0 8px;
}

.status input {
	appearance: none;
	width: 92px;
	height: 14px;
	margin: 0;
	background: linear-gradient(#6f88ac, #6f88ac) center / 100% 1px no-repeat;
}

.status input::-webkit-slider-thumb {
	appearance: none;
	width: 9px;
	height: 12px;
	border: 1px solid #5c7195;
	border-radius: 1px 1px 5px 5px;
	background: #eef4fd;
}

.round:last-child {
	margin-right: 5px;
}

/* taskbar */

.taskbar {
	height: 35px;
	flex: none;
	display: flex;
	gap: 3px;
	background: linear-gradient(90deg, #8594ad, #a7bfdc 7%, #a7bfdc 75%, #8494aa 82%, #8494aa);
}

.start {
	width: 48px;
}

.task {
	width: 53px;
	border: 1px solid transparent;
	border-radius: 3px;
}

.start + .task {
	margin-left: 2px;
}

.open {
	border-color: #4d627f;
	background: linear-gradient(135deg, #dce7f2, #b4c8de);
	box-shadow: inset 0 0 0 1px #e6eff8;
}

.tray {
	margin-left: auto;
	display: flex;
	align-items: center;
	gap: 8px;
}

.clock {
	width: 68px;
	line-height: 15px;
	padding-top: 3px;
	text-align: center;
	color: #fff;
}

.show {
	width: 13px;
	border: 1px solid #a3afbf;
	background: linear-gradient(135deg, #8f9cad, #4f5d70);
}
```
